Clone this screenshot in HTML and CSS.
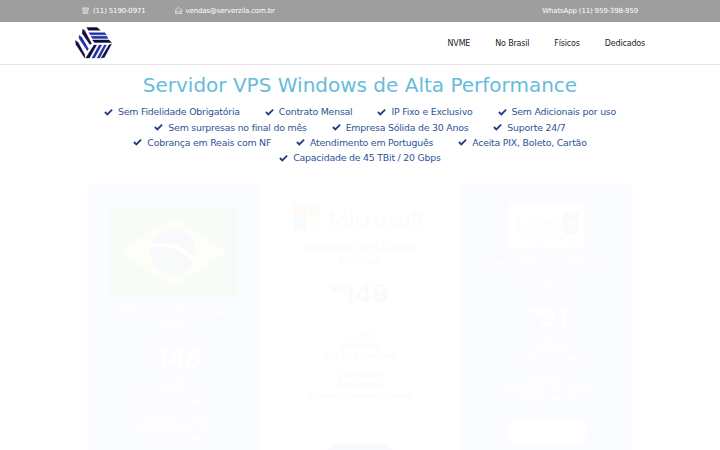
FILE: index.html
```html
<!DOCTYPE html>
<html lang="pt-BR">
<head>
    <meta charset="UTF-8">
    <meta name="viewport" content="width=device-width, initial-scale=1.0">
    <title>Servidor VPS Windows</title>
    <link rel="stylesheet" href="styles.css">
</head>
<body>
    <div class="topbar">
        <div class="contacts">
            <span class="contact">
                <svg class="icon" viewBox="0 0 16 16"><path d="M1 6V2h14v4h-3V4H4v2zM4 7h8l2 8H2zM5 10h6M5 12.500h6"/></svg>
                (11) 5190-0971
            </span>
            <span class="contact">
                <svg class="icon" viewBox="0 0 16 16"><path d="M1 6.500L8 1l7 5.500V15H1zM1 7l7 5 7-5M1 15l5-5M15 15l-5-5"/></svg>
                vendas@serverzila.com.br
            </span>
        </div>
        <span>WhatsApp (11) 959-398-959</span>
    </div>

    <header class="header">
        <svg class="logo" viewBox="0 0 36 32">
            <g class="dark">
                <path d="M11.500 1.500H21.500L24.500 4H13z"/>
                <path d="M17 13.500H33L35.500 16H19z"/>
                <path d="M7.500 3L9.500 4.500L16 17L14.500 18L7 7z"/>
                <path d="M.5 14L3 16L9.500 28V31L1 18z"/>
                <path d="M18.500 18.500H21L14 31H10.500z"/>
                <path d="M33 18.500L35.500 17.500L28.500 30.500L25.500 31z"/>
            </g>
            <g class="blue">
                <path d="M13.500 6.500H29L30.500 8.500H15z"/>
                <path d="M15.500 10H31L32 12H17z"/>
                <path d="M4 9L6.500 11L13 22L12 24L4 12z"/>
                <path d="M23.500 18.500H26L19 31H16.500z"/>
                <path d="M28.500 18.500H30.500L24 31H21.500z"/>
            </g>
        </svg>
        <nav class="menu">
            <a>NVME</a>
            <a>No Brasil</a>
            <a>Físicos</a>
            <a>Dedicados</a>
        </nav>
    </header>

    <main>
        <h1>Servidor VPS Windows de Alta Performance</h1>
        <div class="features">
            <ul>
                <li>Sem Fidelidade Obrigatória</li>
                <li>Contrato Mensal</li>
                <li>IP Fixo e Exclusivo</li>
                <li>Sem Adicionais por uso</li>
            </ul>
            <ul>
                <li>Sem surpresas no final do mês</li>
                <li>Empresa Sólida de 30 Anos</li>
                <li>Suporte 24/7</li>
            </ul>
            <ul>
                <li>Cobrança em Reais com NF</li>
                <li>Atendimento em Português</li>
                <li>Aceita PIX, Boleto, Cartão</li>
            </ul>
            <ul>
                <li>Capacidade de 45 TBit / 20 Gbps</li>
            </ul>
        </div>

        <div class="plans">
            <section class="plan plan-brasil">
                <svg class="flag" viewBox="0 0 129 88">
                    <rect width="129" height="88" fill="#009b3a"/>
                    <path d="M10 44L64 9l54 35-54 35z" fill="#fedf00"/>
                    <circle cx="64" cy="44" r="23" fill="#002776"/>
                    <path d="M42 37q26-3 43 15" fill="none" stroke="#fff" stroke-width="4"/>
                </svg>
                <h2>Windows VPS Cloud1 Brasil</h2>
                <p class="price"><sup>R$</sup>148</p>
                <p class="specs">2 vCPU<br>4 GB RAM<br>60 GB SSD NVMe</p>
                <p class="specs">1 Endereço IP Fixo<br>Transferência 1 TB<br>Datacenter BR</p>
            </section>
            <section class="plan plan-exterior">
                <div class="microsoft">
                    <svg viewBox="0 0 27 27">
                        <path d="M0 0h13v13H0z" fill="#f25022"/>
                        <path d="M14 0h13v13H14z" fill="#7fba00"/>
                        <path d="M0 14h13v13H0z" fill="#00a4ef"/>
                        <path d="M14 14h13v13H14z" fill="#ffb900"/>
                    </svg>
                    Microsoft
                </div>
                <h2>Windows VPS Cloud1 Exterior</h2>
                <p class="price"><sup>R$</sup>149</p>
                <p class="specs">2 vCPU<br>4 GB RAM<br>100 GB SSD NVMe</p>
                <p class="specs">1 Gbps Port<br>Datacenter<br>Estados Unidos ou Europa</p>
                <a class="button"></a>
            </section>
            <section class="plan plan-linux">
                <div class="linux">
                    <div class="linux-name">Linux<b>+</b></div>
                    <div class="linux-sub">POWERED</div>
                </div>
                <h2>Linux VPS Cloud1 Brasil</h2>
                <p class="from">A partir de</p>
                <p class="price"><sup>R$</sup>91</p>
                <p class="specs">2 vCPU<br>4 GB RAM<br>60 GB SSD NVMe</p>
                <p class="specs">Ilimitado<br>Datacenter Tier III Brasil<br>IP Dedicado BR</p>
                <a class="button">Contratar</a>
            </section>
        </div>
    </main>

    <svg class="defs">
        <symbol id="check" viewBox="0 0 10 8"><path d="M1 4l2.700 2.700L9 1.300"/></symbol>
    </svg>
    <script>
        document.querySelectorAll('.features li').forEach((item) => {
            item.insertAdjacentHTML('afterbegin', '<svg class="check"><use href="#check"/></svg>');
        });
    </script>
</body>
</html>
```
FILE: styles.css
```css
* { box-sizing: border-box; }
body { margin: 0; height: 450px; overflow: hidden; background: #fff; font-family: "DejaVu Sans", sans-serif; }
h1, h2, p, ul { margin: 0; padding: 0; font-weight: normal; }
.defs { display: none; }

.topbar { display: flex; justify-content: space-between; align-items: center; height: 22px; padding: 0 82px; background: #9e9e9e; color: #fff; font-size: 7px; letter-spacing: -0.16px; }
.contacts { display: flex; gap: 29px; }
.contact { display: flex; align-items: center; gap: 4px; }
.icon { width: 7px; height: 7px; margin-bottom: 2px; fill: none; stroke: #fff; stroke-width: 1.2; }

.header { display: flex; justify-content: space-between; align-items: center; height: 43px; padding: 0 75px; border-bottom: 1px solid #e4e4e8; }
.logo { width: 37px; height: 33px; margin-bottom: 1px; }
.logo .dark { fill: #120c3c; stroke: #120c3c; stroke-width: 0.4; }
.logo .blue { fill: #1c2fa8; stroke: #1c2fa8; stroke-width: 0.4; }
.menu { display: flex; gap: 25px; color: #222; font-size: 8px; letter-spacing: -0.18px; }

h1 { margin-top: 6px; height: 28px; line-height: 28px; text-align: center; color: #67bcdc; font-size: 20px; }
.features { margin-top: 5px; color: #2f5496; font-size: 9.4px; letter-spacing: -0.22px; }
.features ul { display: flex; justify-content: center; gap: 25px; height: 15.4px; list-style: none; }
.features li { display: flex; align-items: center; gap: 5px; white-space: nowrap; }
.check { width: 9px; height: 8px; fill: none; stroke: #223c82; stroke-width: 2; }

/* start of the fade-in */
.plans { display: flex; gap: 15px; margin: 18px 87px 0; opacity: 0.025; }
.plan { display: flex; flex-direction: column; align-items: center; width: 172px; height: 267px; background: #4a9aff; color: #fff; font-family: Inter, sans-serif; letter-spacing: 0; text-align: center; }
.plan > * { flex-shrink: 0; }
.plan h2 { width: 130px; font-size: 11px; line-height: 13px; font-weight: bold; }
.price { margin: 11px 0 9px; font-size: 26px; line-height: 30px; font-weight: bold; }
.price sup { font-size: 9px; line-height: 0; vertical-align: 11px; }
.specs { margin-bottom: 10px; font-size: 8px; line-height: 9.7px; font-weight: bold; }
.flag { width: 129px; height: 88px; margin: 24px 0 9px; }
.plan-brasil .price { margin: 12px 0 5px; }
.plan-brasil .specs { margin-bottom: 9px; }

.plan-exterior { background: none; color: #777; }
.plan-exterior .price { margin: 12px 0 24px; color: #66a; }
.plan-exterior .button { width: 70px; margin-top: 33px; background: #3a4ae0; }
.microsoft { display: flex; align-items: center; gap: 8px; margin: 19px 0 8px; font-family: "Open Sans", sans-serif; font-size: 22px; line-height: 30px; }
.microsoft svg { width: 27px; height: 27px; }

.plan-linux h2 { width: auto; font-size: 10.500px; }
.from { margin-top: 10px; font-size: 9px; line-height: 13px; font-weight: bold; }
.plan-linux .price { margin: 9px 0 4px; }
.linux { width: 76px; height: 44px; margin: 20px 0 9px; padding-top: 9px; background: #fff; color: #999; }
.linux-name { font-family: "Liberation Serif", serif; font-size: 20px; line-height: 20px; color: #b77; }
.linux-name b { padding: 0 2px; background: #777; color: #fff; }
.linux-sub { font-size: 9px; line-height: 13px; letter-spacing: 2px; }
.button { width: 80px; height: 27px; margin-top: 4px; border-radius: 14px; background: #fff; color: #fff4d0; font-size: 9px; line-height: 27px; }
```
